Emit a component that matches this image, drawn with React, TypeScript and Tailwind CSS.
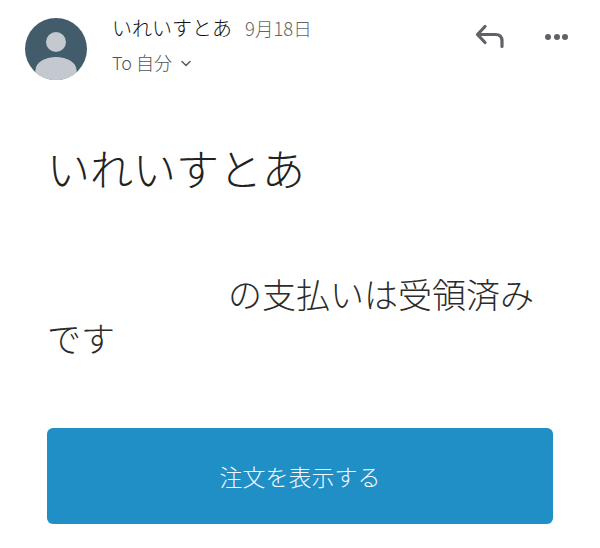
import * as React from "react";

function Avatar() {
  return (
    <svg width="62" height="62" viewBox="0 0 62 62" className="shrink-0">
      <defs>
        <clipPath id="avatar-clip">
          <circle cx="31" cy="31" r="31" />
        </clipPath>
      </defs>
      <circle cx="31" cy="31" r="31" fill="#435c6b" />
      <g clipPath="url(#avatar-clip)">
        <circle cx="31" cy="24" r="10" fill="#c3c9ce" />
        <ellipse cx="31" cy="52" rx="20.5" ry="13" fill="#c3c9ce" />
        <rect x="10.5" y="52" width="41" height="10" fill="#c3c9ce" />
      </g>
    </svg>
  );
}

function ReplyIcon() {
  return (
    <svg width="30" height="26" viewBox="0 0 30 26" fill="none" stroke="#5f6368" strokeWidth="3.2" strokeLinecap="round" strokeLinejoin="round">
      <path d="M11 2.5 L3.5 10.5 L11 18.5" />
      <path d="M4 10.5 H21.5 Q28 10.5 28 17 V22.5" />
    </svg>
  );
}

export default function App() {
  return (
    <div className="h-[548px] w-[600px] overflow-hidden bg-white font-['Noto_Sans_CJK_JP','Liberation_Sans',sans-serif]">
      <header className="flex items-start pl-[25px] pr-[32px] pt-[18px]">
        <Avatar />
        <div className="ml-[25px] flex-1">
          <div className="-mt-[2px] flex items-center gap-[13px] leading-[24px]">
            <span className="text-[20px] font-light text-[#111]">いれいすとあ</span>
            <span className="text-[18.5px] font-light text-[#62666a]">9月18日</span>
          </div>
          <div className="mt-[10px] flex items-center gap-[8px] text-[18px] font-light leading-[24px] text-[#505458]">
            <span>To 自分</span>
            <svg width="12" height="8" viewBox="0 0 12 8" fill="none" stroke="#5c6064" strokeWidth="1.6" strokeLinecap="round" strokeLinejoin="round" className="mt-[3px]">
              <path d="M2 1.5 L6 5.5 L10 1.5" />
            </svg>
          </div>
        </div>
        <div className="flex items-center gap-[41px] pt-[6px]">
          <ReplyIcon />
          <div className="flex gap-[2.5px]">
            <span className="h-[6px] w-[6px] rounded-full bg-[#5f6368]" />
            <span className="h-[6px] w-[6px] rounded-full bg-[#5f6368]" />
            <span className="h-[6px] w-[6px] rounded-full bg-[#5f6368]" />
          </div>
        </div>
      </header>

      <main className="px-[47px]">
        <h1 className="mt-[57px] text-[43px] font-light leading-[60px] text-[#222]">いれいすとあ</h1>
        <p className="mt-[75px] w-[500px] text-[34px] font-light leading-[44px] text-[#2b2b2b]">
          <span className="inline-block w-[181px]" />の支払いは受領済みです
        </p>
        <button className="mt-[68px] flex h-[96px] w-[506px] items-center justify-center rounded-[6px] bg-[#1f8fc6] text-[23px] font-light text-[#f2fafe]">
          注文を表示する
        </button>
      </main>
    </div>
  );
}
